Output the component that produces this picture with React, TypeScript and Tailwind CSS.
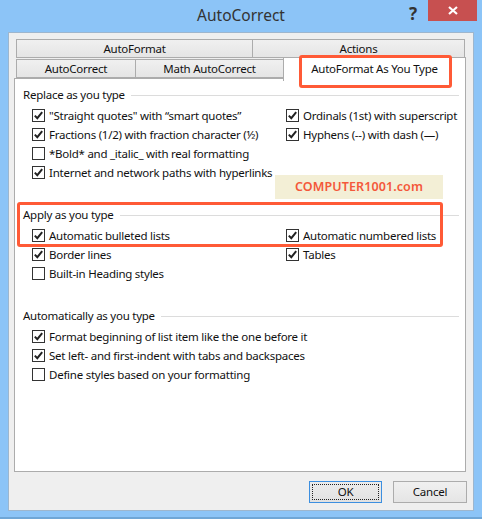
import React from "react";

const font = { fontFamily: '"Noto Sans", "Open Sans", sans-serif' };

function Check({ on }: { on: boolean }) {
  return (
    <span className="w-[13px] h-[13px] border border-[#333333] bg-white flex items-center justify-center shrink-0">
      {on && (
        <svg width="11" height="11" viewBox="0 0 11 11">
          <path d="M1.8 5.6 L4.3 8.2 L9.2 2.2" fill="none" stroke="#222" strokeWidth="2" />
        </svg>
      )}
    </span>
  );
}

function Item({ label, on }: { label: string; on: boolean }) {
  return (
    <div className="flex items-center h-[19px] gap-[4px]">
      <Check on={on} />
      <span className="whitespace-nowrap">{label}</span>
    </div>
  );
}

function Section({ title }: { title: string }) {
  return (
    <div className="flex items-center h-[18px] gap-[6px] pr-[6px]">
      <span className="whitespace-nowrap">{title}</span>
      <div className="flex-1 h-px bg-[#dcdcdc]" />
    </div>
  );
}

function Tab({ label, w }: { label: string; w: string }) {
  return (
    <div
      className={`${w} h-[19px] border border-[#acacac] -ml-px first:ml-0 bg-gradient-to-b from-[#f0f0f0] to-[#e5e5e5] flex items-center justify-center`}
    >
      {label}
    </div>
  );
}

export default function App() {
  return (
    <div
      className="w-[482px] h-[519px] bg-[#8cc4f7] relative flex flex-col text-[11.5px] tracking-[-0.25px] text-[#111] border-b-2 border-[#6fa6d6]"
      style={font}
    >
      {/* title bar */}
      <div className="h-[32px] shrink-0 flex items-center justify-center text-[15.5px] tracking-normal text-[#333]">
        AutoCorrect
      </div>
      <div className="absolute left-[409px] top-[1px] text-[17px] font-bold text-[#333]">?</div>
      <div className="absolute left-[428px] top-0 w-[49px] h-[21px] bg-[#c75050] flex items-center justify-center">
        <svg width="10" height="9" viewBox="0 0 10 9">
          <path d="M1 1 L9 8 M9 1 L1 8" stroke="white" strokeWidth="2.2" />
        </svg>
      </div>

      {/* client */}
      <div className="mx-[8px] h-[479px] bg-[#efefef] border border-[#9db6ce] flex flex-col pl-[5px] pt-[6px]">
        <div className="flex flex-col w-[452px]">
          <div className="flex ml-[2px]">
            <Tab label="AutoFormat" w="w-[237px]" />
            <Tab label="Actions" w="w-[213px]" />
          </div>
          <div className="flex ml-[2px] -mt-px items-end">
            <Tab label="AutoCorrect" w="w-[120px]" />
            <Tab label="Math AutoCorrect" w="w-[149px]" />
            <div className="w-[183px] h-[24px] -ml-px -mb-[3px] relative z-10 bg-white border border-b-0 border-[#acacac] flex justify-center pt-[2px]">
              AutoFormat As You Type
            </div>
          </div>
          <div className="h-[394px] bg-white border border-[#acacac] pl-[8px] pt-[7px] flex flex-col">
            <Section title="Replace as you type" />
            <div className="flex pl-[9px] pt-[2px]">
              <div className="w-[254px] flex flex-col">
                <Item on label={'"Straight quotes" with \u201Csmart quotes\u201D'} />
                <Item on label="Fractions (1/2) with fraction character (½)" />
                <Item on={false} label="*Bold* and _italic_ with real formatting" />
                <Item on label="Internet and network paths with hyperlinks" />
              </div>
              <div className="flex flex-col">
                <Item on label="Ordinals (1st) with superscript" />
                <Item on label="Hyphens (--) with dash (—)" />
              </div>
            </div>
            <div className="h-[24px]" />
            <Section title="Apply as you type" />
            <div className="flex pl-[9px] pt-[2px]">
              <div className="w-[254px] flex flex-col">
                <Item on label="Automatic bulleted lists" />
                <Item on label="Border lines" />
                <Item on={false} label="Built-in Heading styles" />
              </div>
              <div className="flex flex-col">
                <Item on label="Automatic numbered lists" />
                <Item on label="Tables" />
              </div>
            </div>
            <div className="h-[24px]" />
            <Section title="Automatically as you type" />
            <div className="flex flex-col pl-[9px] pt-[2px]">
              <Item on label="Format beginning of list item like the one before it" />
              <Item on label="Set left- and first-indent with tabs and backspaces" />
              <Item on={false} label="Define styles based on your formatting" />
            </div>
          </div>
        </div>

        <div className="flex justify-end gap-[11px] pr-[6px] pt-[9px]">
          <button className="w-[73px] h-[22px] border border-[#3c8fe0] bg-gradient-to-b from-[#ececec] to-[#e1e1e1] p-[2px]">
            <div className="w-full h-full border border-dotted border-[#222] flex items-center justify-center">OK</div>
          </button>
          <button className="w-[74px] h-[22px] border border-[#acacac] bg-gradient-to-b from-[#f0f0f0] to-[#e5e5e5] flex items-center justify-center">
            Cancel
          </button>
        </div>
      </div>

      {/* overlays: annotation */}
      <div className="absolute left-[275px] top-[175px] w-[168px] h-[24px] bg-[#f3efd6] flex items-center justify-center text-[12.5px] font-semibold tracking-[0.1px] text-[#f4583a]">
        COMPUTER1001.com
      </div>
      <div className="absolute left-[299px] top-[55px] w-[153px] h-[33px] border-[3px] border-[#ff5a36] rounded-[3px] z-20" />
      <div className="absolute left-[17px] top-[202px] w-[426px] h-[45px] border-[3px] border-[#ff5a36] rounded-[3px] z-20" />
    </div>
  );
}
